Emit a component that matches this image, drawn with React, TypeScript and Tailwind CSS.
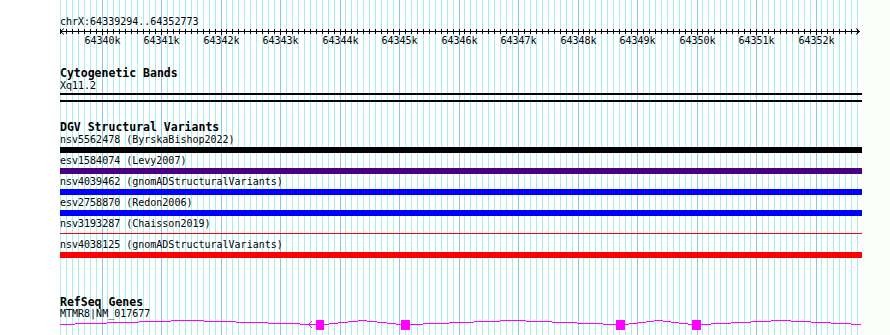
import React from 'react'

const START = 64339294
const END = 64352773
const WIDTH = 802
const SCALE = WIDTH / (END - START)

const toX = (bp: number) => (bp - START) * SCALE

const minorTicks: number[] = []
for (let bp = Math.ceil(START / 100) * 100; bp <= END; bp += 100) minorTicks.push(bp)
const majorTicks = minorTicks.filter((bp) => bp % 1000 === 0)

interface Variant {
	name: string
	color: string
	thin?: boolean
}

const variants: Variant[] = [
	{ name: 'nsv5562478 (ByrskaBishop2022)', color: 'bg-[#000000]' },
	{ name: 'esv1584074 (Levy2007)', color: 'bg-[#4b0082]' },
	{ name: 'nsv4039462 (gnomADStructuralVariants)', color: 'bg-[#0000ff]' },
	{ name: 'esv2758870 (Redon2006)', color: 'bg-[#0000ff]' },
	{ name: 'nsv3193287 (Chaisson2019)', color: 'bg-[#ff0000]', thin: true },
	{ name: 'nsv4038125 (gnomADStructuralVariants)', color: 'bg-[#ff0000]' },
]

function GridLines() {
	return (
		<svg className="absolute inset-0" width={WIDTH} height={335} shapeRendering="crispEdges">
			{minorTicks.map((bp) => (
				<rect
					key={bp}
					x={Math.floor(toX(bp))}
					y={0}
					width={1}
					height={335}
					fill={bp % 1000 === 0 ? '#8cc6e8' : '#aaeeee'}
				/>
			))}
		</svg>
	)
}

function Ruler() {
	return (
		<svg width={WIDTH} height={20} shapeRendering="crispEdges" className="block">
			<rect x={0} y={3} width={800} height={1} fill="#000" />
			{minorTicks.map((bp) => (
				<rect key={bp} x={Math.floor(toX(bp))} y={1} width={1} height={bp % 1000 === 0 ? 6 : 5} fill="#000" />
			))}
			<path d="M4 0.5 L0.5 3.5 L4 6.5" stroke="#000" fill="none" shapeRendering="auto" />
			<path d="M796 0.5 L799.5 3.5 L796 6.5" stroke="#000" fill="none" shapeRendering="auto" />
			{majorTicks.map((bp) => (
				<text
					key={bp}
					x={Math.floor(toX(bp)) + 0.5}
					y={16}
					textAnchor="middle"
					fontSize={10}
					fontFamily="'DejaVu Sans Mono', monospace"
					fill="#000"
				>
					{bp / 1000}k
				</text>
			))}
		</svg>
	)
}

// intron hats and exons, in screen pixels
const hats: [number, number][] = [
	[59, 316],
	[324, 401],
	[410, 616],
	[625, 692],
	[701, 861],
]
const exons: [number, number][] = [
	[316, 324],
	[401, 410],
	[616, 625],
	[692, 701],
]

function hatSegments(a: number, b: number) {
	const segs: { x: number; w: number; y: number }[] = []
	for (let px = Math.max(a, 60); px < Math.min(b, 862); px++) {
		const t = (px + 0.5 - a) / (b - a)
		const y = Math.round(324 - 4 * (1 - Math.abs(2 * t - 1)))
		const last = segs[segs.length - 1]
		if (last && last.y === y && last.x + last.w === px) last.w++
		else segs.push({ x: px, w: 1, y })
	}
	return segs
}

function GeneGlyph() {
	const top = 320
	return (
		<svg width={WIDTH} height={12} shapeRendering="crispEdges" className="block">
			{hats.flatMap(([a, b]) =>
				hatSegments(a, b).map((s) => (
					<rect key={`${a}-${s.x}`} x={s.x - 60} y={s.y - top} width={s.w} height={1} fill="#ff00ff" />
				)),
			)}
			{exons.map(([a, b]) => (
				<rect key={a} x={a - 60} y={320 - top} width={b - a} height={10} fill="#ff00ff" />
			))}
			<path
				d={`M${312 - 60} ${321 - top} L${308.5 - 60} ${324.5 - top} L${312 - 60} ${328 - top}`}
				stroke="#ff00ff"
				fill="none"
				shapeRendering="auto"
			/>
		</svg>
	)
}

export default function App() {
	return (
		<div className="flex w-[890px] h-[335px] overflow-hidden bg-white font-['DejaVu_Sans_Mono',monospace] text-black">
			<div className="w-[60px] shrink-0" />
			<div className="relative w-[802px] h-[335px] shrink-0">
				<GridLines />
				<div className="relative flex flex-col pt-[16px]">
					<p className="text-[10px] leading-[12px] h-[12px]">chrX:64339294..64352773</p>
					<Ruler />

					<p className="mt-[18px] text-[11.5px] leading-[14px] font-bold">Cytogenetic Bands</p>
					<p className="text-[10px] leading-[12px]">Xq11.2</p>
					<div className="mt-[1px] h-[9px] border-y-2 border-black" />

					<p className="mt-[19px] text-[11.5px] leading-[13px] font-bold">DGV Structural Variants</p>
					{variants.map((v) => (
						<div key={v.name} className="flex flex-col h-[21px]">
							<p className="text-[10px] leading-[12px] h-[12px] whitespace-nowrap">{v.name}</p>
							<div className="mt-[1px] h-[6px] flex flex-col">
								{v.thin ? (
									<div className={`mt-[2px] h-[1px] ${v.color}`} />
								) : (
									<div className={`h-[6px] ${v.color}`} />
								)}
							</div>
						</div>
					))}

					<p className="mt-[35px] text-[11.5px] leading-[14px] font-bold">RefSeq Genes</p>
					<p className="-mt-[1px] text-[10px] leading-[12px]">MTMR8|NM_017677</p>
					<GeneGlyph />
				</div>
			</div>
			<div className="flex-1 bg-[#fcfefc]" />
		</div>
	)
}
